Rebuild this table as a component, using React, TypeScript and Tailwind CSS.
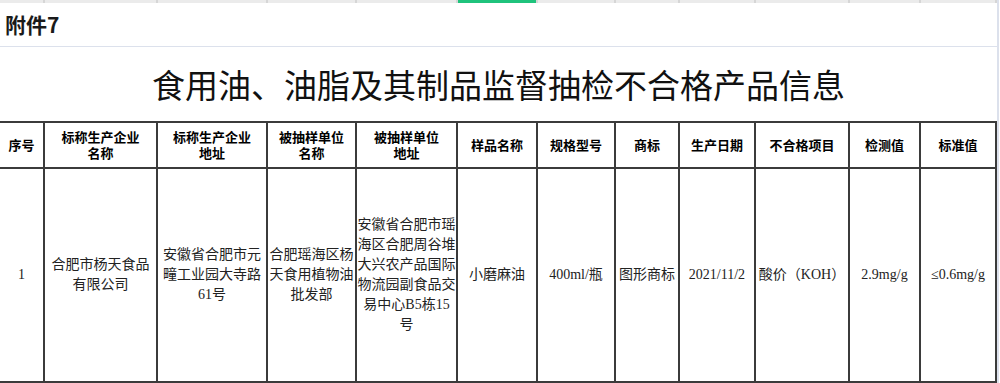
import React from "react";

const COLS =
  "grid grid-cols-[43px_111px_108px_87px_99px_78px_76px_62px_74px_92px_69px_74px]";

const headers: string[][] = [
  ["序号"],
  ["标称生产企业", "名称"],
  ["标称生产企业", "地址"],
  ["被抽样单位", "名称"],
  ["被抽样单位", "地址"],
  ["样品名称"],
  ["规格型号"],
  ["商标"],
  ["生产日期"],
  ["不合格项目"],
  ["检测值"],
  ["标准值"],
];

const data: string[][] = [
  ["1"],
  ["合肥市杨天食品", "有限公司"],
  ["安徽省合肥市元", "疃工业园大寺路", "61号"],
  ["合肥瑶海区杨", "天食用植物油", "批发部"],
  ["安徽省合肥市瑶", "海区合肥周谷堆", "大兴农产品国际", "物流园副食品交", "易中心B5栋15", "号"],
  ["小磨麻油"],
  ["400ml/瓶"],
  ["图形商标"],
  ["2021/11/2"],
  ["酸价（KOH）"],
  ["2.9mg/g"],
  ["≤0.6mg/g"],
];

export default function App() {
  return (
    <div className="w-[1000px] h-[383px] overflow-hidden bg-white flex">
      <div className="w-[997px] flex flex-col">
        {/* spreadsheet column header strip */}
        <div className={`${COLS} gap-x-[2px] h-[3px] bg-[#d6d6d6] pr-[2px]`}>
          {headers.map((_, i) => (
            <div key={i} className={i === 5 ? "bg-[#1fc37c]" : "bg-[#ebebeb]"} />
          ))}
        </div>
        {/* 附件7 row */}
        <div
          className="h-[43px] flex items-center pl-[5px] text-[21px] font-bold text-[#1a1a1a]"
          style={{ fontFamily: '"Noto Sans CJK SC", sans-serif' }}
        >
          附件7
        </div>
        <div className="h-[1px] bg-[#dce1ec]" />
        {/* title */}
        <div
          className="h-[74px] flex items-center justify-center text-[33px] leading-none text-[#111] font-normal"
          style={{ fontFamily: '"Noto Sans CJK SC", sans-serif' }}
        >
          食用油、油脂及其制品监督抽检不合格产品信息
        </div>
        {/* table */}
        <div className={`${COLS} gap-[2px] bg-[#3b3b3b] py-[2px] pr-[2px]`}>
          {headers.map((lines, i) => (
            <div
              key={i}
              className="h-[44px] bg-white flex flex-col items-center justify-center text-[13px] leading-[16px] font-bold text-black whitespace-nowrap"
              style={{ fontFamily: '"Noto Sans CJK SC", sans-serif' }}
            >
              {lines.map((l, j) => (
                <span key={j}>{l}</span>
              ))}
            </div>
          ))}
          {data.map((lines, i) => (
            <div
              key={i}
              className="h-[212px] bg-white flex flex-col items-center justify-center text-[14px] leading-[20px] text-[#222] whitespace-nowrap"
              style={{ fontFamily: '"Liberation Serif", "Noto Sans CJK SC", serif' }}
            >
              {lines.map((l, j) => (
                <span key={j}>{l}</span>
              ))}
            </div>
          ))}
        </div>
      </div>
      <div className="w-[2px] bg-[#dce1ec]" />
    </div>
  );
}
